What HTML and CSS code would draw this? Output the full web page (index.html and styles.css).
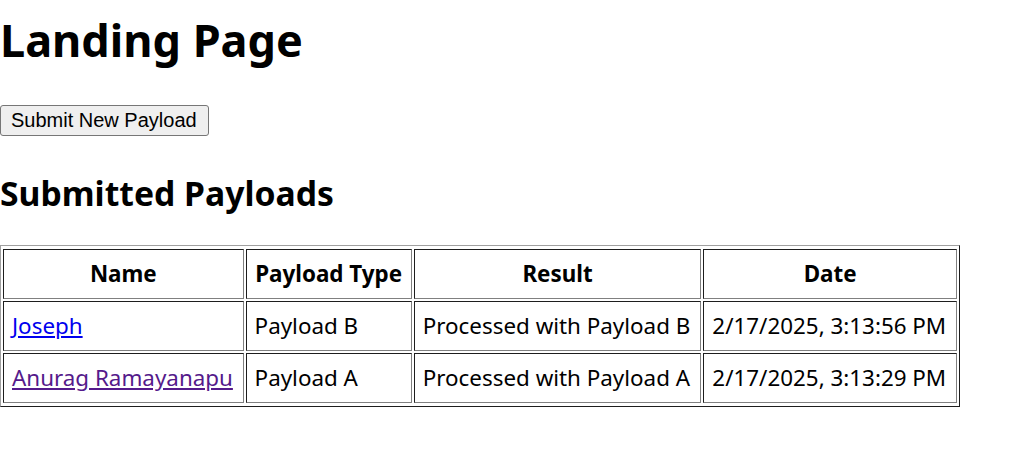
FILE: index.html
```html
<!DOCTYPE html>
<html lang="en">
<head>
<meta charset="utf-8">
<title>Landing Page</title>
<link rel="stylesheet" href="styles.css">
</head>
<body>
<h1 class="title">Landing Page</h1>
<button class="submit-btn" type="button">Submit New Payload</button>
<h2 class="subtitle">Submitted Payloads</h2>
<table class="payloads">
  <thead>
    <tr><th>Name</th><th>Payload Type</th><th>Result</th><th>Date</th></tr>
  </thead>
  <tbody>
    <tr><td><a class="link" href="#">Joseph</a></td><td>Payload B</td><td>Processed with Payload B</td><td>2/17/2025, 3:13:56 PM</td></tr>
    <tr><td><a class="link visited" href="#">Anurag Ramayanapu</a></td><td>Payload A</td><td>Processed with Payload A</td><td>2/17/2025, 3:13:29 PM</td></tr>
  </tbody>
</table>
</body>
</html>
```
FILE: styles.css
```css
html, body {
  margin: 0;
  padding: 0;
  background: #fff;
}
body {
  font-family: "Noto Sans", "Open Sans", sans-serif;
  font-size: 22.4px;
  line-height: 32px;
  color: #000;
}
.title {
  font-size: 45px;
  line-height: 64px;
  font-weight: 700;
  margin: 8px 0 33px;
}
.submit-btn {
  display: block;
  font-family: "Liberation Sans", Arial, sans-serif;
  font-size: 20px;
  height: 31px;
  padding: 0 11px 0 10px;
  margin: 0;
  background: #efefef;
  border: 1px solid #767676;
  border-radius: 3px;
  color: #000;
}
.subtitle {
  font-size: 33.7px;
  line-height: 48px;
  font-weight: 700;
  margin: 33px 0 28px;
}
.payloads {
  width: 960px;
  border-collapse: separate;
  border-spacing: 2px;
  padding: 1px 0;
  border: 1px solid;
  border-color: #a0a0a0 #1e1e1e #1e1e1e #a0a0a0;
}
.payloads th,
.payloads td {
  padding: 8px;
  border: 1px solid;
  border-color: #1e1e1e #808080 #808080 #1e1e1e;
  text-align: left;
  white-space: nowrap;
}
.payloads th {
  text-align: center;
  font-weight: 700;
}
.link {
  color: #0000ee;
  text-decoration: underline;
}
.link.visited {
  color: #551a8b;
}
```
